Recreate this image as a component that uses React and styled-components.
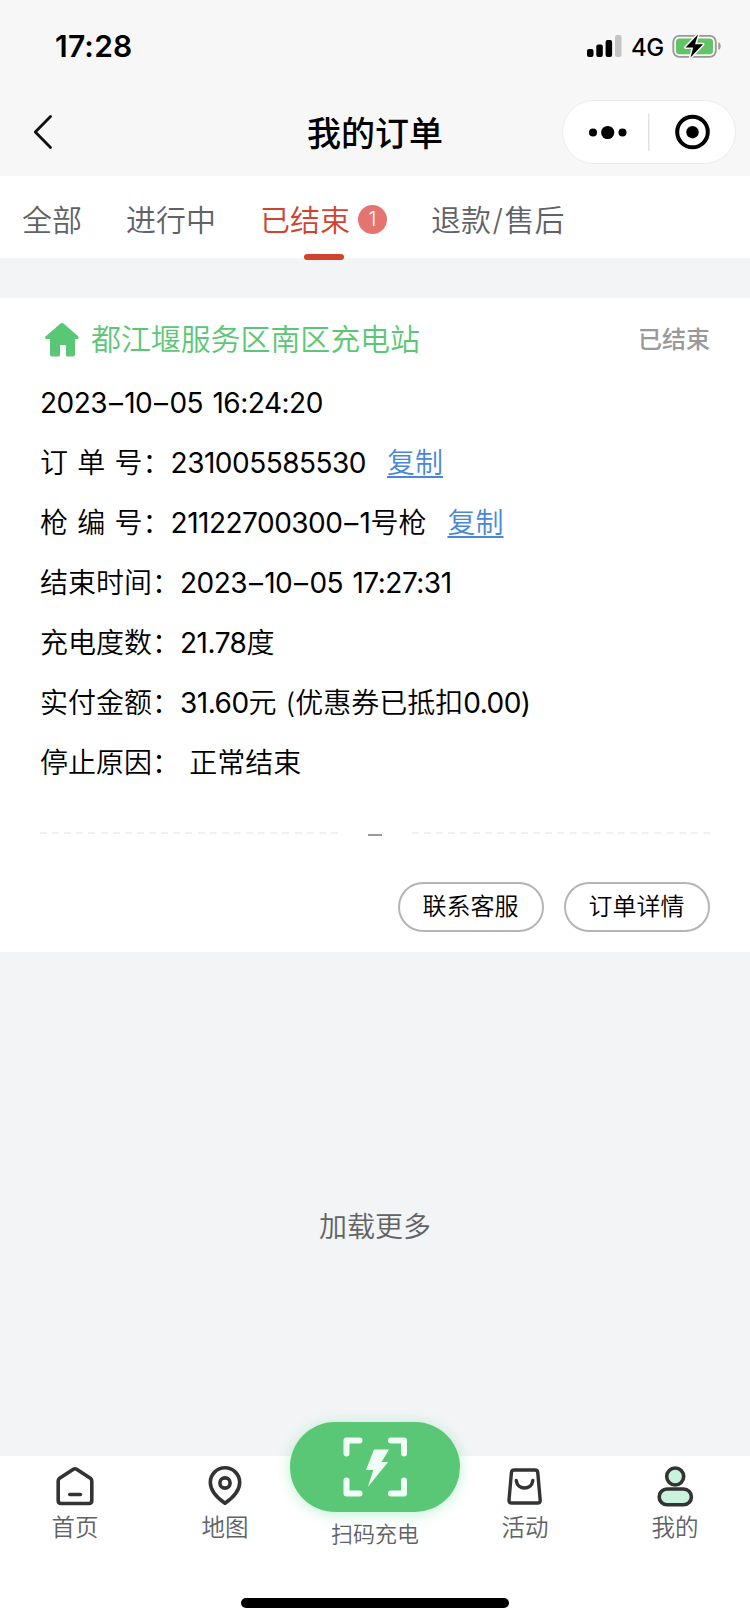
import React from 'react';
import styled, { createGlobalStyle } from 'styled-components';

const GlobalStyle = createGlobalStyle`
  * {
    box-sizing: border-box;
  }

  body {
    margin: 0;
    background: #f2f4f6;
    font-family: Inter, "Noto Sans CJK SC", sans-serif;
    font-weight: 350;
    color: #000;
  }
`;

const Page = styled.div`
  display: flex;
  flex-direction: column;
  width: 750px;
  height: 1624px;
  overflow: hidden;
`;

const Header = styled.header`
  display: flex;
  flex-direction: column;
  flex: none;
  height: 176px;
  background: #f7f7f7;
`;

const StatusBar = styled.div`
  display: flex;
  align-items: center;
  justify-content: space-between;
  height: 88px;
  padding: 4px 28px 0 55px;
`;

const Clock = styled.div`
  font-size: 30px;
  font-weight: 600;
  line-height: 40px;
  letter-spacing: 0.2px;
`;

const StatusIcons = styled.div`
  display: flex;
  align-items: center;
`;

const Network = styled.span`
  width: 50px;
  padding: 3px 0 0 9px;
  font-size: 24px;
  font-weight: 500;
  line-height: 30px;
  letter-spacing: -0.6px;
`;

const NavBar = styled.div`
  display: grid;
  grid-template-columns: 1fr auto 1fr;
  align-items: center;
  height: 88px;
  padding: 0 14px 0 33px;
`;

const BackIcon = styled.svg`
  width: 20px;
  height: 36px;
`;

const NavTitle = styled.h1`
  margin: 0;
  padding: 3px 19px 0 0;
  font-size: 34px;
  font-weight: 500;
  line-height: 44px;
`;

const Capsule = styled.div`
  display: flex;
  align-items: center;
  justify-self: end;
  width: 174px;
  height: 64px;
  border: 1px solid #ececec;
  border-radius: 32px;
  background: #fff;
`;

const Tabs = styled.nav`
  display: flex;
  flex: none;
  height: 82px;
  background: #fff;
`;

const Tab = styled.div`
  position: relative;
  display: flex;
  align-items: center;
  padding: 5px 22px 0;
  font-size: 30px;
  line-height: 40px;
  color: ${(props) => (props.$active ? '#d2432f' : '#606266')};

  &::after {
    content: '';
    display: ${(props) => (props.$active ? 'block' : 'none')};
    position: absolute;
    bottom: -2px;
    left: 50%;
    width: 40px;
    height: 6px;
    margin-left: -20px;
    border-radius: 3px;
    background: #d2432f;
  }
`;

const Slash = styled.span`
  margin: 0 1.5px;
`;

const Badge = styled.span`
  width: 29px;
  height: 29px;
  margin-left: 8px;
  border-radius: 50%;
  background: #e57470;
  color: #fff;
  font-size: 20px;
  line-height: 29px;
  text-align: center;
`;

const Card = styled.section`
  display: flex;
  flex-direction: column;
  flex: none;
  height: 654px;
  margin-top: 40px;
  padding: 11px 40px 20px;
  background: #fff;
`;

const CardHead = styled.div`
  display: flex;
  align-items: center;
  height: 64px;
  padding-bottom: 4px;
`;

const HouseIcon = styled.svg`
  width: 36px;
  height: 36px;
  margin: 1px 11px 0 4px;
`;

const Station = styled.h2`
  flex: 1;
  margin: 0;
  font-size: 30px;
  font-weight: 350;
  line-height: 40px;
  letter-spacing: -0.1px;
  color: #5ac777;
`;

const State = styled.span`
  padding-top: 2px;
  font-size: 24px;
  font-weight: 500;
  line-height: 34px;
  color: #999;
`;

const Row = styled.div`
  height: 60px;
  font-size: 28px;
  line-height: 60px;
  white-space: pre;
`;

const Label = styled.span`
  word-spacing: 1.4px;
`;

const Value = styled.span`
  font-weight: 400;
  letter-spacing: -0.5px;
  word-spacing: 2px;
`;

const Dash = styled.span`
  margin: 0 1.8px;
`;

const Han = styled.span`
  font-weight: 350;
  letter-spacing: 0;
  word-spacing: 1px;
`;

const Copy = styled.a`
  margin-left: 21px;
  color: #4a87d8;
  text-decoration: underline;
  text-decoration-thickness: 2px;
  text-underline-offset: 3px;
`;

const Divider = styled.div`
  display: flex;
  align-items: center;
  justify-content: space-between;
  height: 80px;
`;

const Dashes = styled.span`
  width: 298px;
  height: 2px;
  background: repeating-linear-gradient(90deg, #f0f0f0 0 7px, #fff 7px 12.12px);
`;

const Mark = styled.span`
  width: 14px;
  height: 2px;
  margin-top: 3px;
  background: #999;
`;

const Actions = styled.div`
  display: flex;
  justify-content: flex-end;
  gap: 20px;
  margin-top: auto;
`;

const Button = styled.button`
  width: 146px;
  height: 50px;
  padding: 0 1px 1px 0;
  border: 2px solid #b5b5b5;
  border-radius: 25px;
  background: #fff;
  color: #000;
  font-family: inherit;
  font-weight: inherit;
  font-size: 24px;
  line-height: 44px;
`;

const LoadMore = styled.div`
  display: flex;
  flex: 1;
  align-items: center;
  justify-content: center;
  padding-top: 42px;
  font-size: 28px;
  color: #606266;
`;

const Footer = styled.footer`
  display: flex;
  flex-direction: column;
  justify-content: space-between;
  align-items: center;
  flex: none;
  height: 168px;
  padding-bottom: 16px;
  background: #fff;
`;

const TabBar = styled.div`
  display: flex;
  width: 100%;
  height: 110px;
`;

const TabItem = styled.div`
  display: flex;
  flex-direction: column;
  align-items: center;
  width: 150px;
  padding-top: 9px;
  font-size: 23.5px;
  line-height: 32px;
  color: #606266;

  svg {
    width: 42px;
    height: 42px;
    margin-bottom: 5px;
  }
`;

const ScanItem = styled(TabItem)`
  padding-top: 0;
  margin-top: -34px;
  font-size: 22px;

  svg {
    width: 66px;
    height: 62px;
    margin: 0;
  }
`;

const ScanButton = styled.div`
  display: flex;
  flex: none;
  align-items: center;
  justify-content: center;
  width: 170px;
  height: 90px;
  margin-bottom: 6px;
  border-radius: 45px;
  background: #5ac777;
  box-shadow: 0 2px 14px rgba(90, 220, 140, 0.4);
`;

const HomeIndicator = styled.div`
  width: 268px;
  height: 10px;
  border-radius: 5px;
  background: #000;
`;

const tabs = [
  { text: '全部' },
  { text: '进行中' },
  { text: '已结束', active: true, count: 1 },
  { text: <span>退款<Slash>/</Slash>售后</span> }
];

const SignalIcon = () => (
  <svg width="35" height="22" viewBox="0 0 35 22">
    <rect x="0" y="14" width="6.5" height="8" rx="2" />
    <rect x="9.3" y="9.5" width="6.5" height="12.5" rx="2" />
    <rect x="18.6" y="5" width="6.5" height="17" rx="2" />
    <rect x="28" y="0" width="6.5" height="22" rx="2" fill="#c4c4c4" />
  </svg>
);

const BatteryIcon = () => (
  <svg width="50" height="26" viewBox="0 0 50 26">
    <rect x="1.3" y="2.8" width="42.5" height="21" rx="6" fill="none" stroke="#999" strokeWidth="1.8" />
    <rect x="4" y="5.5" width="37" height="15.8" rx="3.5" fill="#62c466" />
    <path d="M46.3 9.2c3.2.8 3.2 7 0 7.8z" fill="#999" />
    <path
      d="M26 1.5L13.5 14.5h7.7L18.5 24.5l12.5-13.2h-8z"
      fill="#000"
      stroke="#f7f7f7"
      strokeWidth="3"
      strokeLinejoin="round"
      paintOrder="stroke"
    />
  </svg>
);

const CapsuleIcons = () => (
  <svg width="172" height="62" viewBox="0 0 172 62">
    <circle cx="30" cy="31.5" r="4" />
    <circle cx="44.7" cy="31.5" r="6.6" />
    <circle cx="59.5" cy="31.5" r="4" />
    <path d="M85.8 12.5v37.5" stroke="#dcdcdc" strokeWidth="1.2" />
    <circle cx="129.5" cy="31" r="15.3" fill="none" stroke="#000" strokeWidth="4" />
    <circle cx="129.5" cy="31.2" r="6.2" />
  </svg>
);

const HomeIcon = () => (
  <svg viewBox="0 0 42 42" fill="none" stroke="#333" strokeWidth="3.6" strokeLinejoin="round" strokeLinecap="round">
    <path d="M19.4 4.2L5.2 13.6Q4.2 14.5 4.2 16v19.5q0 3 3 3h27.6q3 0 3-3V16q0-1.5-1-2.4L22.6 4.2q-1.6-1-3.2 0z" />
    <path d="M15.8 29.5h10.6" />
  </svg>
);

const MapIcon = () => (
  <svg viewBox="0 0 42 42" fill="none" stroke="#333" strokeWidth="3.6" strokeLinejoin="round">
    <path d="M21 38.3C17 35.5 6.3 27 6.3 17.5a14.7 14.7 0 0 1 29.4 0C35.7 27 25 35.5 21 38.3z" />
    <circle cx="21" cy="18" r="5.1" />
  </svg>
);

const BagIcon = () => (
  <svg viewBox="0 0 42 42" fill="none" stroke="#333" strokeWidth="3.4" strokeLinejoin="round" strokeLinecap="round">
    <path d="M10.4 5h20.4q2.8 0 3 2.8l2.4 27.4q.2 2.8-2.6 2.8H7.6q-2.8 0-2.6-2.8L7.4 7.8q.2-2.8 3-2.8z" />
    <path d="M12.3 15.5c1 10 15.500 10 16.500 0" />
  </svg>
);

const MineIcon = () => (
  <svg viewBox="0 0 42 42" fill="#c9f3dc" stroke="#333" strokeWidth="3.6">
    <circle cx="21.2" cy="11.5" r="8.5" />
    <rect x="5.2" y="24" width="32.2" height="15.8" rx="7.9" />
  </svg>
);

const ScanIcon = () => (
  <svg viewBox="0 0 66 62" fill="none">
    <g stroke="#effff5" strokeWidth="6" strokeLinecap="round" strokeLinejoin="round">
      <path d="M4.5 17.5V4.5h13" />
      <path d="M49 4.5h13v13" />
      <path d="M4.5 44.5v13h13" />
      <path d="M62 44.5v13H49" />
    </g>
    <path d="M32 13.5h15L39.6 26h6.5L25.8 51l5.500-17H24z" fill="#effff5" />
  </svg>
);

const DateTime = ({ date, time }) => (
  <Value>
    {date.split('–').map((part, index) => (
      <React.Fragment key={index}>
        {index > 0 && <Dash>–</Dash>}
        {part}
      </React.Fragment>
    ))}
    {` ${time}`}
  </Value>
);

export default function App() {
  return (
    <>
      <GlobalStyle />
      <Page>
        <Header>
          <StatusBar>
            <Clock>17:28</Clock>
            <StatusIcons>
              <SignalIcon />
              <Network>4G</Network>
              <BatteryIcon />
            </StatusIcons>
          </StatusBar>
          <NavBar>
            <BackIcon viewBox="0 0 20 36">
              <path d="M17.5 2.5L2.3 18l15.2 15.5" fill="none" stroke="#111" strokeWidth="2.8" strokeLinecap="round" strokeLinejoin="round" />
            </BackIcon>
            <NavTitle>我的订单</NavTitle>
            <Capsule>
              <CapsuleIcons />
            </Capsule>
          </NavBar>
        </Header>

        <Tabs>
          {tabs.map((tab, index) => (
            <Tab key={index} $active={tab.active}>
              {tab.text}
              {tab.count && <Badge>{tab.count}</Badge>}
            </Tab>
          ))}
        </Tabs>

        <Card>
          <CardHead>
            <HouseIcon viewBox="0 0 36 36" fill="#5ac777">
              <path d="M16.2 1.7q1.8-1.4 3.6 0L34 14q1.8 2.5-.8 3H31v15.5q0 2-2 2h-5.5q-1.5 0-1.5-1.5V24q0-1-1-1h-4q-1 0-1 1v9q0 1.500-1.500 1.500H8q-2 0-2-2V17H2.200q-2-.7-.7-2.500z" />
            </HouseIcon>
            <Station>都江堰服务区南区充电站</Station>
            <State>已结束</State>
          </CardHead>
          <Row>
            <DateTime date="2023–10–05" time="16:24:20" />
          </Row>
          <Row>
            <Label>订 单 号：</Label>
            <Value>231005585530</Value>
            <Copy>复制</Copy>
          </Row>
          <Row>
            <Label>枪 编 号：</Label>
            <Value>21122700300<Dash>–</Dash>1<Han>号枪</Han></Value>
            <Copy>复制</Copy>
          </Row>
          <Row>
            <Label>结束时间：</Label>
            <DateTime date="2023–10–05" time="17:27:31" />
          </Row>
          <Row>
            <Label>充电度数：</Label>
            <Value>21.78<Han>度</Han></Value>
          </Row>
          <Row>
            <Label>实付金额：</Label>
            <Value>31.60<Han>元 (优惠券已抵扣</Han>0.00)</Value>
          </Row>
          <Row>
            <Label>停止原因： 正常结束</Label>
          </Row>
          <Divider>
            <Dashes />
            <Mark />
            <Dashes />
          </Divider>
          <Actions>
            <Button>联系客服</Button>
            <Button>订单详情</Button>
          </Actions>
        </Card>

        <LoadMore>加载更多</LoadMore>

        <Footer>
          <TabBar>
            <TabItem>
              <HomeIcon />
              首页
            </TabItem>
            <TabItem>
              <MapIcon />
              地图
            </TabItem>
            <ScanItem>
              <ScanButton>
                <ScanIcon />
              </ScanButton>
              扫码充电
            </ScanItem>
            <TabItem>
              <BagIcon />
              活动
            </TabItem>
            <TabItem>
              <MineIcon />
              我的
            </TabItem>
          </TabBar>
          <HomeIndicator />
        </Footer>
      </Page>
    </>
  );
}
